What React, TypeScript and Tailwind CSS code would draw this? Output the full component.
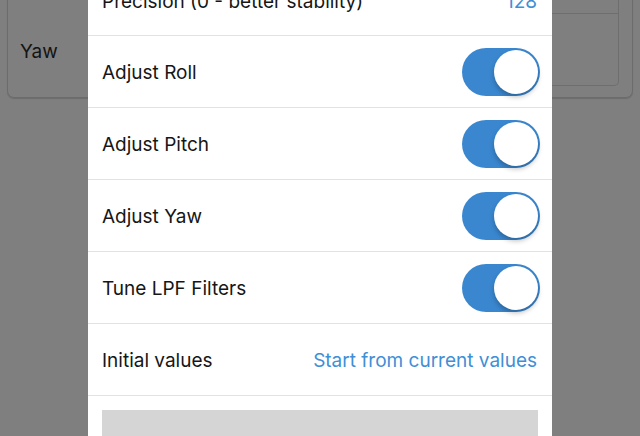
import React from 'react';

const rows = [
  { label: 'Adjust Roll' },
  { label: 'Adjust Pitch' },
  { label: 'Adjust Yaw' },
  { label: 'Tune LPF Filters' },
];

function Toggle() {
  return (
    <div className="relative w-[78px] h-[48px] rounded-full bg-[#3a87d0]">
      <div className="absolute right-[2px] top-[2px] w-[44px] h-[44px] rounded-full bg-white shadow-[0_3px_5px_rgba(0,0,0,0.25)]" />
    </div>
  );
}

export default function App() {
  return (
    <div
      className="relative w-[640px] h-[436px] overflow-hidden bg-[#7f7f7f]"
      style={{ fontFamily: 'Inter, "Liberation Sans", sans-serif' }}
    >
      {/* page behind the overlay */}
      <div className="mx-[7px] h-[98px] border-x border-b border-[#6c6c6c] rounded-b-[7px] shadow-[0_1px_1px_rgba(0,0,0,0.15)]">
        <div className="ml-[100px] mr-[13px] h-[86px] border-r border-b border-[#6e6e6e] rounded-br-[5px] pt-[13px]">
          <div className="border-t border-[#6e6e6e] h-[72px]" />
        </div>
      </div>
      <div className="absolute left-[20px] top-[38px] text-[19px] text-[#141414]">Yaw</div>

      {/* modal sheet */}
      <div className="absolute left-[88px] top-[-36px] w-[464px] h-[480px] bg-white">
        <div className="h-[72px] flex items-center justify-between pl-[14px] pr-[15px] border-b border-[#e2e2e2]">
          <span className="mt-[5px] text-[19px] text-[#161616]">Precision (0 - better stability)</span>
          <span className="mt-[5px] text-[19px] text-[#3f8fd6]">128</span>
        </div>
        {rows.map((r) => (
          <div
            key={r.label}
            className="h-[72px] flex items-center justify-between pl-[14px] pr-[12px] border-b border-[#e2e2e2]"
          >
            <span className="mt-[3px] text-[19px] text-[#161616]">{r.label}</span>
            <Toggle />
          </div>
        ))}
        <div className="h-[72px] flex items-center justify-between pl-[14px] pr-[15px] border-b border-[#e2e2e2]">
          <span className="mt-[3px] text-[19px] text-[#161616]">Initial values</span>
          <span className="mt-[3px] text-[19px] text-[#3f8fd6]">Start from current values</span>
        </div>
        <div className="px-[14px] pt-[14px]">
          <div className="h-[60px] bg-[#d5d5d5]" />
        </div>
      </div>
    </div>
  );
}
